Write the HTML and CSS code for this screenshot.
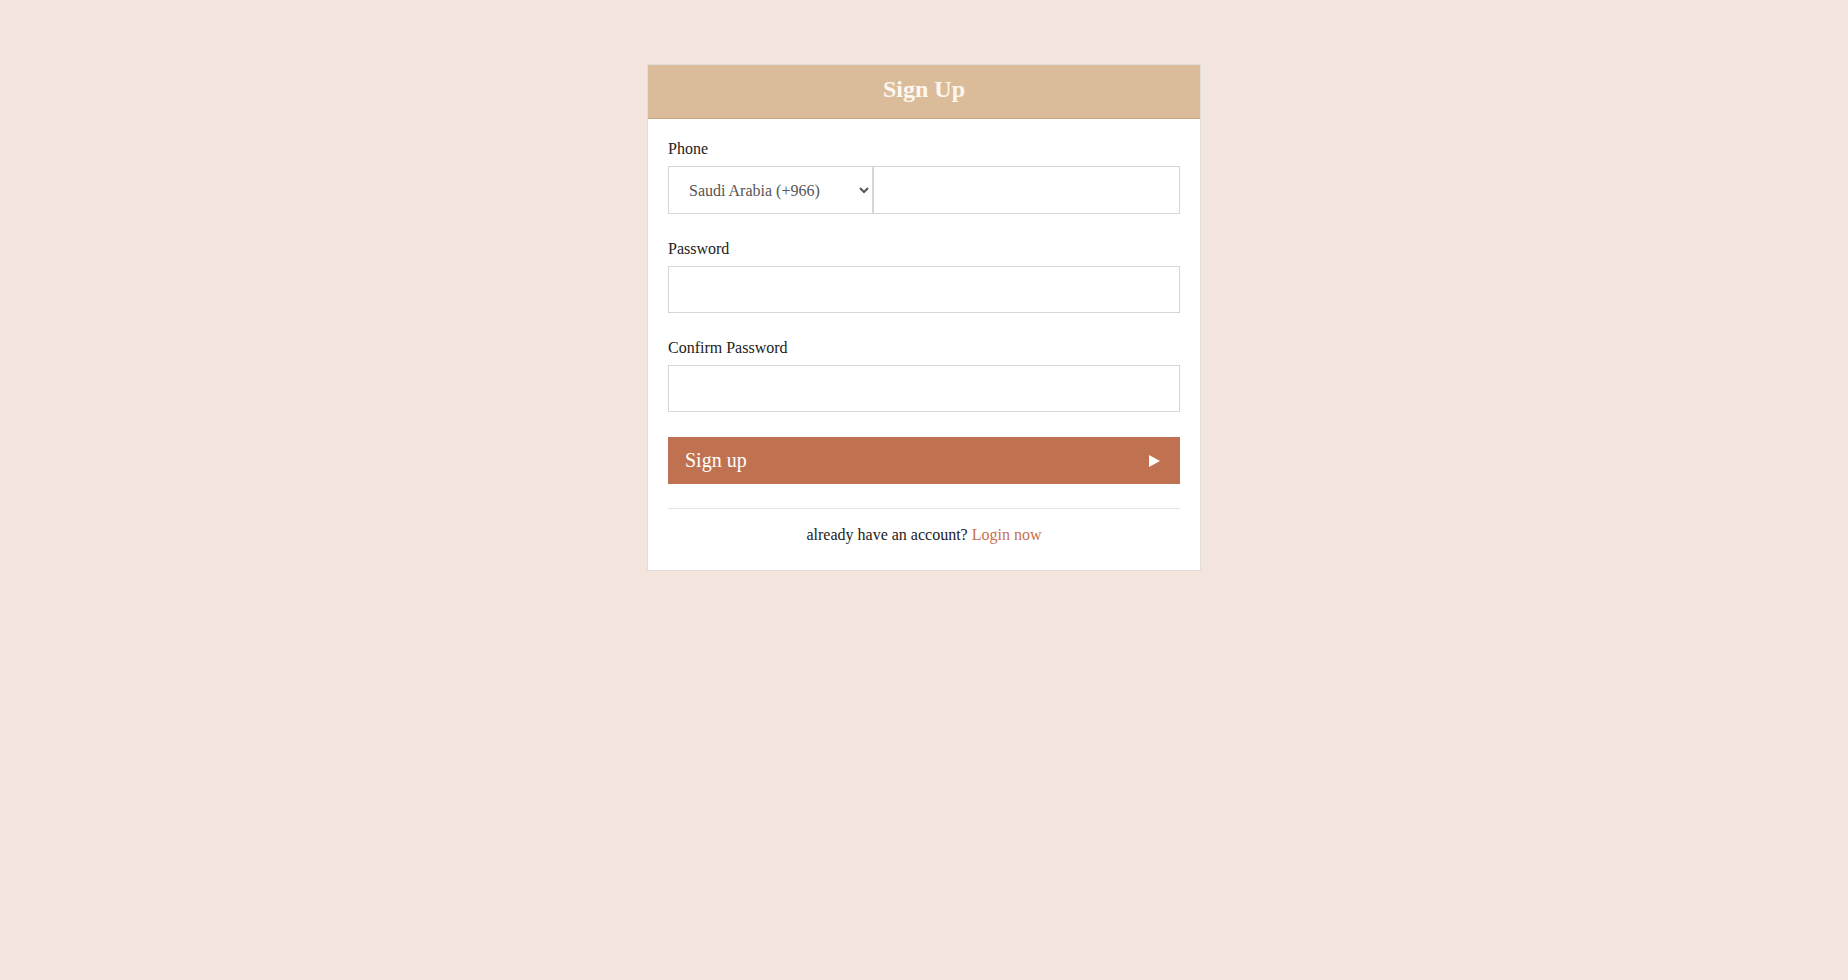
FILE: index.html
```html
<!DOCTYPE html>
<html lang="en">
<head>
<meta charset="utf-8">
<title>Sign Up</title>
<link rel="stylesheet" href="styles.css">
</head>
<body>
<main class="page">
  <section class="card">
    <header class="card-header">
      <h1 class="card-title">Sign Up</h1>
    </header>
    <form class="card-body">
      <div class="field">
        <label class="label">Phone</label>
        <div class="phone-row">
          <select class="country">
            <option>Saudi Arabia (+966)</option>
          </select>
          <input class="input phone-input" type="tel">
        </div>
      </div>
      <div class="field">
        <label class="label">Password</label>
        <input class="input" type="password">
      </div>
      <div class="field">
        <label class="label">Confirm Password</label>
        <input class="input" type="password">
      </div>
      <button class="submit" type="button">
        <span>Sign up</span>
        <svg class="submit-icon" width="11" height="12" viewBox="0 0 11 12"><path d="M0 0 L11 6 L0 12 Z" fill="#fff"/></svg>
      </button>
      <hr class="divider">
      <p class="footer-text">already have an account? <a class="link" href="#">Login now</a></p>
    </form>
  </section>
</main>
</body>
</html>
```
FILE: styles.css
```css
* { box-sizing: border-box; }
html, body { margin: 0; padding: 0; }
body {
  background: #f3e4dd;
  font-family: "Liberation Serif", "Times New Roman", serif;
  color: #222;
  min-height: 980px;
}
.page {
  display: flex;
  justify-content: center;
  padding-top: 64px;
}
.card {
  width: 554px;
  background: #fff;
  border: 1px solid #e0dcd9;
}
.card-header {
  background: #dbbc9a;
  border-bottom: 1px solid #c8a784;
  height: 54px;
  display: flex;
  align-items: center;
  justify-content: center;
}
.card-title {
  margin: 0;
  font-family: "Liberation Serif", serif;
  font-weight: bold;
  font-size: 24px;
  color: #fdf7f0;
  line-height: 1;
  padding-bottom: 5px;
}
.card-body {
  padding: 20px 20px 26px;
  display: flex;
  flex-direction: column;
}
.field {
  display: flex;
  flex-direction: column;
  margin-bottom: 25px;
}
.label {
  font-size: 16px;
  line-height: 19px;
  margin-bottom: 8px;
  color: #222;
}
.phone-row {
  display: flex;
}
.country {
  width: 40%;
  height: 48px;
  border: 1px solid #d3d6db;
  border-radius: 0;
  background: #fff;
  font-family: "Liberation Serif", serif;
  font-size: 16px;
  color: #555;
  padding: 0 0 0 16px;
  margin: 0;
  outline: none;
}
.input {
  height: 47px;
  border: 1px solid #d3d6db;
  border-radius: 0;
  background: #fff;
  font-family: "Liberation Serif", serif;
  font-size: 16px;
  padding: 0 12px;
  margin: 0;
  outline: none;
  width: 100%;
}
.phone-input {
  width: 60%;
  height: 48px;
}
.submit {
  height: 47px;
  background: #c07250;
  border: 0;
  color: #fff;
  font-family: "Liberation Serif", serif;
  font-size: 20px;
  display: flex;
  align-items: center;
  justify-content: space-between;
  padding: 0 20px 0 17px;
  cursor: pointer;
}
.submit-icon { display: block; }
.divider {
  border: 0;
  border-top: 1px solid #e3e3e3;
  margin: 24px 0 0;
  height: 0;
}
.footer-text {
  margin: 16px 0 0;
  text-align: center;
  font-size: 16px;
  line-height: 19px;
  color: #222;
}
.link {
  color: #c8704f;
  text-decoration: none;
}
```
